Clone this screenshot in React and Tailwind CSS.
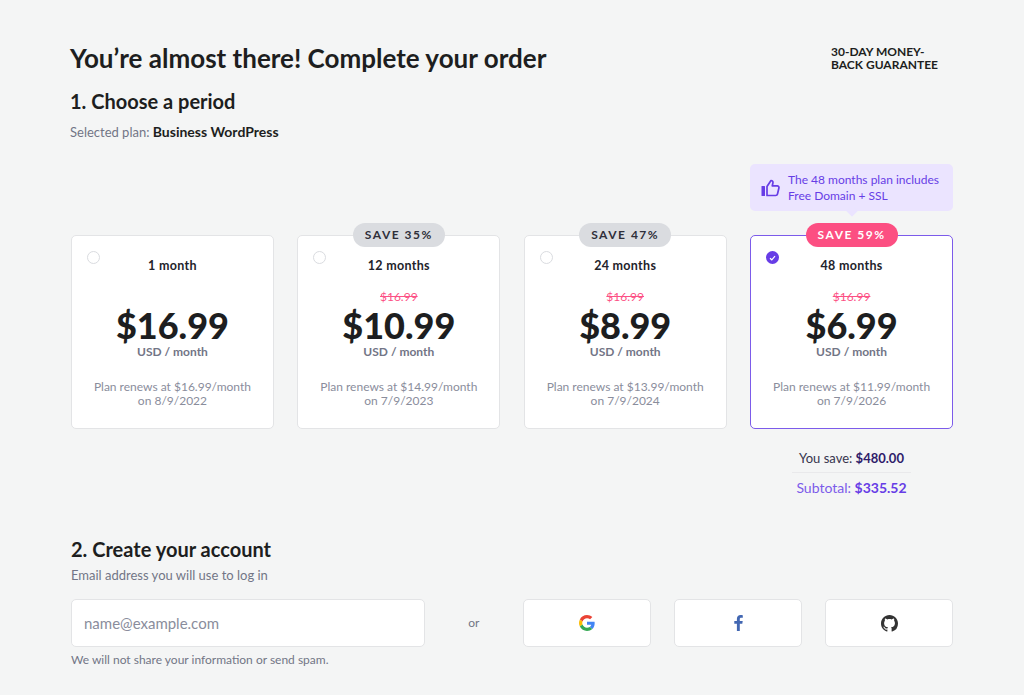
import React from "react"

const font = "font-['Lato','Noto_Sans',sans-serif]"

const plans = [
  { period: "1 month", price: "$16.99", renew: "Plan renews at $16.99/month", date: "on 8/9/2022" },
  { period: "12 months", price: "$10.99", renew: "Plan renews at $14.99/month", date: "on 7/9/2023", old: "$16.99", save: "SAVE 35%" },
  { period: "24 months", price: "$8.99", renew: "Plan renews at $13.99/month", date: "on 7/9/2024", old: "$16.99", save: "SAVE 47%" },
  { period: "48 months", price: "$6.99", renew: "Plan renews at $11.99/month", date: "on 7/9/2026", old: "$16.99", save: "SAVE 59%", active: true },
]

function ThumbIcon() {
  return (
    <svg width="19" height="18" viewBox="0 0 19 18" fill="none" className="shrink-0">
      <rect x="0.5" y="7" width="3.5" height="10" rx="0.5" fill="#673de6" />
      <path
        d="M6 16.5V7.5L10 1.5C11.5 1.5 12.2 2.6 11.9 4L11.3 6.8H16.2C17.4 6.8 18.2 7.9 17.9 9L16.5 15C16.3 15.9 15.5 16.5 14.6 16.5H6Z"
        stroke="#673de6"
        strokeWidth="1.7"
        strokeLinejoin="round"
      />
    </svg>
  )
}

function GoogleIcon() {
  return (
    <svg width="16" height="16" viewBox="0 0 48 48">
      <path fill="#EA4335" d="M24 9.5c3.5 0 6.7 1.2 9.2 3.6l6.9-6.9C35.9 2.4 30.5 0 24 0 14.6 0 6.5 5.4 2.6 13.2l8 6.2C12.5 13.7 17.800 9.5 24 9.500z" />
      <path fill="#4285F4" d="M47 24.500c0-1.600-.1-3.100-.4-4.500H24v9h12.900c-.6 3-2.200 5.500-4.700 7.200l7.700 6C44.400 38 47 31.800 47 24.500z" />
      <path fill="#FBBC05" d="M10.600 28.600C10.100 27.200 9.800 25.600 9.800 24s.3-3.200.8-4.600l-8-6.200C.9 16.500 0 20.100 0 24s.9 7.500 2.600 10.800l8-6.200z" />
      <path fill="#34A853" d="M24 48c6.500 0 11.900-2.100 15.900-5.800l-7.700-6c-2.200 1.500-5 2.300-8.200 2.300-6.200 0-11.500-4.200-13.400-9.900l-8 6.200C6.500 42.600 14.600 48 24 48z" />
    </svg>
  )
}

function FacebookIcon() {
  return (
    <svg width="9" height="16" viewBox="0 0 9 16">
      <path fill="#4267b2" d="M5.800 16V8.800h2.500l.4-2.900H5.800V4.200c0-.8.2-1.400 1.400-1.400h1.600V.2C8.500.1 7.600 0 6.600 0 4.400 0 2.900 1.300 2.900 3.800v2.100H.3v2.900h2.600V16h2.900z" />
    </svg>
  )
}

function GithubIcon() {
  return (
    <svg width="17" height="17" viewBox="0 0 16 16">
      <path fill="#333333" d="M8 0C3.580 0 0 3.580 0 8c0 3.540 2.290 6.530 5.470 7.590.4.070.55-.17.55-.38 0-.19-.01-.82-.01-1.490-2.010.37-2.530-.49-2.690-.94-.09-.23-.48-.94-.82-1.130-.28-.15-.68-.52-.01-.53.63-.01 1.080.58 1.230.82.720 1.210 1.870.87 2.330.66.070-.52.280-.87.510-1.070-1.780-.2-3.640-.89-3.640-3.950 0-.87.310-1.590.820-2.150-.08-.2-.36-1.020.08-2.120 0 0 .67-.21 2.200.82.640-.18 1.320-.27 2-.27s1.360.09 2 .27c1.530-1.040 2.200-.82 2.200-.82.44 1.100.16 1.920.08 2.120.51.560.820 1.270.820 2.150 0 3.070-1.870 3.750-3.650 3.950.29.250.54.730.54 1.480 0 1.070-.01 1.930-.01 2.200 0 .21.150.46.550.38A8.010 8.010 0 0 0 16 8c0-4.420-3.580-8-8-8z" />
    </svg>
  )
}

function PlanCard({ plan }) {
  return (
    <div
      className={`relative h-[194px] rounded-[5px] bg-white text-center ${
        plan.active ? "border border-[#7c5bea]" : "border border-[#e3e4e6]"
      }`}
    >
      {plan.save && (
        <span
          className={`absolute left-1/2 -top-[13px] -translate-x-1/2 h-[24px] whitespace-nowrap rounded-full px-[12px] text-[12px] leading-[24px] font-bold tracking-[1.500px] ${
            plan.active ? "bg-[#fc4f82] text-white" : "bg-[#dadce0] text-[#2f2f3a]"
          }`}
        >
          {plan.save}
        </span>
      )}
      {plan.active ? (
        <span className="absolute left-[15px] top-[15px] flex h-[13px] w-[13px] items-center justify-center rounded-full bg-[#673de6]">
          <svg width="7" height="6" viewBox="0 0 7 6" fill="none">
            <path d="M1 3.200L2.800 4.800L6 1.200" stroke="white" strokeWidth="1.200" />
          </svg>
        </span>
      ) : (
        <span className="absolute left-[15px] top-[15px] h-[13px] w-[13px] rounded-full border border-[#dadce0] bg-white" />
      )}
      <div className="pt-[22px] text-[12.500px] leading-[16px] font-bold tracking-[0.300px] text-[#23232b]">{plan.period}</div>
      <div className="mt-[16px] h-[14px] text-[12px] leading-[14px] text-[#fc5185] line-through">{plan.old}</div>
      <div className="mt-[0px] text-[36px] leading-[42px] font-black text-[#1d1e20]">{plan.price}</div>
      <div className="-mt-[1px] text-[12px] leading-[13px] font-bold text-[#727586]">USD / month</div>
      <div className="mt-[22px] text-[12px] leading-[14px] text-[#8a8d9c]">
        <div>{plan.renew}</div>
        <div>{plan.date}</div>
      </div>
    </div>
  )
}

function SocialButton({ children }) {
  return (
    <button className="flex h-[48px] w-[128px] items-center justify-center rounded-[5px] border border-[#e3e4e6] bg-white">
      {children}
    </button>
  )
}

export default function App() {
  return (
    <div className={`${font} h-[695px] overflow-hidden bg-[#f4f5f5] pl-[70px] pr-[71px] pt-[41px] text-[#1d1e20]`}>
      <div className="flex items-start justify-between">
        <h1 className="text-[26px] leading-[34px] font-bold">You’re almost there! Complete your order</h1>
        <div className="mt-[4px] w-[122px] text-[12px] leading-[13px] font-bold">
          30-DAY MONEY-BACK GUARANTEE
        </div>
      </div>

      <h2 className="mt-[13px] text-[20px] leading-[26px] font-bold">1. Choose a period</h2>
      <p className="mt-[9px] text-[13px] leading-[18px] text-[#727586]">
        Selected plan: <span className="text-[14px] font-bold text-[#1d1e20]">Business WordPress</span>
      </p>

      <div className="mt-[23px] flex justify-end">
        <div className="relative flex h-[47px] w-[203px] items-center gap-[8px] rounded-[5px] bg-[#ebe4ff] pl-[11px] text-[12px] leading-[16px] text-[#673de6]">
          <ThumbIcon />
          <div>
            <div>The 48 months plan includes</div>
            <div>Free Domain + SSL</div>
          </div>
          <span className="absolute left-1/2 -bottom-[4px] h-[8px] w-[8px] -translate-x-1/2 rotate-45 bg-[#ebe4ff]" />
        </div>
      </div>

      <div className="mt-[24px] grid grid-cols-4 gap-[23.500px] pl-[1px]">
        {plans.map((plan) => (
          <PlanCard key={plan.period} plan={plan} />
        ))}
      </div>

      <div className="mt-[20px] flex justify-end pr-[42px]">
        <div className="w-[119px] text-center">
          <div className="border-b border-[#e9e9eb] pb-[5px] text-[13px] leading-[18px] text-[#36344d]">
            You save: <span className="font-bold text-[#2f1c6a]">$480.00</span>
          </div>
          <div className="mt-[5px] whitespace-nowrap text-[14px] leading-[20px] text-[#7c5bea]">
            Subtotal: <span className="font-bold text-[#673de6]">$335.52</span>
          </div>
        </div>
      </div>

      <h2 className="mt-[38px] pl-[1px] text-[20px] leading-[26px] font-bold">2. Create your account</h2>
      <p className="mt-[4px] pl-[1px] text-[13px] leading-[18px] text-[#727586]">Email address you will use to log in</p>

      <div className="mt-[15px] flex items-center pl-[1px]">
        <input
          readOnly
          placeholder="name@example.com"
          className="h-[48px] w-[354px] rounded-[5px] border border-[#e3e4e6] bg-white px-[12px] text-[15px] outline-none placeholder:text-[#8a8d9c]"
        />
        <span className="w-[98.500px] text-center text-[12px] text-[#727586]">or</span>
        <div className="flex gap-[23px]">
          <SocialButton><GoogleIcon /></SocialButton>
          <SocialButton><FacebookIcon /></SocialButton>
          <SocialButton><GithubIcon /></SocialButton>
        </div>
      </div>
      <p className="mt-[5px] pl-[1px] text-[12px] leading-[16px] text-[#727586]">We will not share your information or send spam.</p>
    </div>
  )
}
